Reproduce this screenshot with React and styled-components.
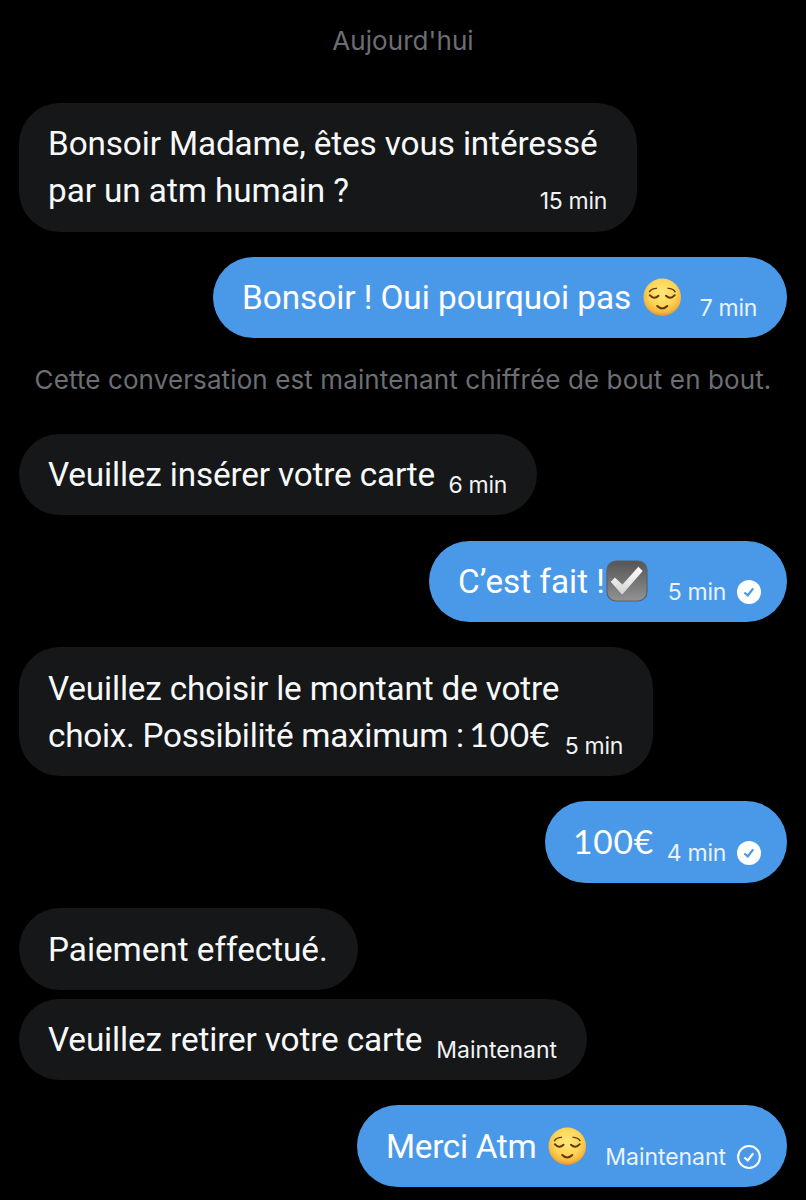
import React from "react";
import styled, { createGlobalStyle } from "styled-components";

const GlobalStyle = createGlobalStyle`
  *, *::before, *::after { box-sizing: border-box; }
  body { margin: 0; background: #000; }
`;

const Conversation = styled.main`
  display: flex;
  flex-direction: column;
  gap: 25.25px;
  width: 806px;
  height: 1200px;
  padding: 19px 19px 0;
  overflow: hidden;
  background: #000;
`;

const Notice = styled.p`
  margin: 0;
  text-align: center;
  white-space: nowrap;
  color: #6b6f74;
  font: 400 26px/44px Inter, "Liberation Sans", sans-serif;
  letter-spacing: ${(p) => p.$tracking ?? 0}px;
`;

const DayLabel = styled(Notice)`
  margin-bottom: 14.6px;
`;

const EncryptionNote = styled(Notice)`
  margin: -5.4px 0 6px;
`;

const MessageGroup = styled.div`
  display: flex;
  flex-direction: column;
  align-items: ${(p) => (p.$sent ? "flex-end" : "flex-start")};
  gap: 8.5px;
`;

const Bubble = styled.article`
  display: flex;
  flex-direction: column;
  width: ${(p) => p.$width}px;
  padding: 17.4px 30px 17.3px 29px;
  border-radius: 41px;
  color: ${(p) => (p.$sent ? "#fff" : "#f7f9f9")};
  background: ${(p) => (p.$sent ? "#4a99e9" : "#161719")};
`;

const Line = styled.div`
  display: flex;
  justify-content: space-between;
  height: 47px;
  white-space: nowrap;
`;

const Body = styled.span`
  display: flex;
  font: 400 33.3px/47px Roboto, "Liberation Sans", sans-serif;
  letter-spacing: ${(p) => p.$tracking ?? 0}px;
`;

const Amount = styled.span`
  margin: ${(p) => (p.$inline ? "0 0 0 -4px" : "0 0 0 -1px")};
  font: 400 33.5px/45px Lato, sans-serif;
  letter-spacing: 0.8px;
`;

const Meta = styled.span`
  display: flex;
  align-items: center;
  gap: 11px;
  height: 24px;
  margin: 21.8px ${(p) => (p.$status ? "-4px" : "0")} 0 0;
  color: ${(p) => (p.$sent ? "#e8f3fd" : "#f1f3f4")};
  font: 400 23px/24px Inter, "Liberation Sans", sans-serif;
  letter-spacing: ${(p) => p.$tracking ?? -0.3}px;
`;

const FaceIcon = styled.svg`
  width: 38.5px;
  height: 38.5px;
  margin: 4px 0 0 ${(p) => p.$offset}px;
`;

const CheckboxIcon = styled.svg`
  width: 42px;
  height: 42px;
  margin: 2px 0 0 1px;
`;

const StatusIcon = styled.svg`
  width: 24px;
  height: 24px;
  fill: none;
`;

function RelievedFace({ id, offset }) {
  return (
    <FaceIcon viewBox="0 0 39 39" $offset={offset} role="img" aria-label="😌">
      <defs>
        <radialGradient id={id} cx=".5" cy=".38" r=".64">
          <stop offset="0" stopColor="#ffe878" />
          <stop offset=".55" stopColor="#fdd659" />
          <stop offset=".82" stopColor="#f5b840" />
          <stop offset="1" stopColor="#dc8a2c" />
        </radialGradient>
      </defs>
      <circle cx="19.5" cy="19.5" r="19" fill={`url(#${id})`} />
      <g fill="none" stroke="#633609" strokeLinecap="round">
        <path d="M6.6 13.8Q8.6 10.6 13.6 10.5M25.4 10.5Q30.4 10.6 32.4 13.8" strokeWidth="1.5" />
        <path d="M6.9 17.4Q11.2 22.4 15.7 18M23.3 18Q27.8 22.4 32.1 17.4" strokeWidth="2" />
        <path d="M14.4 28.4Q19.5 33.4 24.6 28.4" strokeWidth="2.1" />
      </g>
    </FaceIcon>
  );
}

function Checkbox() {
  return (
    <CheckboxIcon viewBox="0 0 42 42" role="img" aria-label="☑️">
      <defs>
        <linearGradient id="box" x2="0" y2="1">
          <stop stopColor="#555" />
          <stop offset="1" stopColor="#929292" />
        </linearGradient>
        <linearGradient id="tick" x2="0" y2="1">
          <stop stopColor="#fff" />
          <stop offset="1" stopColor="#d2d2d2" />
        </linearGradient>
      </defs>
      <rect x="1" y="1" width="40" height="40" rx="9" fill="url(#box)" stroke="#5b6168" strokeWidth="1.2" />
      <path d="M4.4 21.8l4.5-4.6 7.5 7.1L32.4 6.6l4.6 4.4-20.9 24.2z" fill="url(#tick)" stroke="#4c4c4c" strokeWidth=".4" />
    </CheckboxIcon>
  );
}

function Status({ kind }) {
  const read = kind === "read";
  return (
    <StatusIcon viewBox="0 0 24 24" role="img" aria-label={read ? "Lu" : "Envoyé"}>
      <circle cx="12" cy="12" r={read ? 12 : 10.9} fill={read ? "#fff" : "none"} stroke={read ? "none" : "#fff"} strokeWidth="2" />
      <path d="M7.4 12.5l3.4 2.9 5.4-7" stroke={read ? "#4a99e9" : "#fff"} strokeWidth="2.3" />
    </StatusIcon>
  );
}

function Message({ width, sent, lines, time, timeTracking, status }) {
  return (
    <Bubble $width={width} $sent={sent}>
      {lines.map(({ text, tracking, amount, extra }, i) => (
        <Line key={i}>
          <Body $tracking={tracking}>
            {text && <span>{text}</span>}
            {amount && <Amount $inline={Boolean(text)}>{text ? "\u00a0" : ""}{amount}</Amount>}
            {extra}
          </Body>
          {time && i === lines.length - 1 && (
            <Meta $sent={sent} $status={status} $tracking={timeTracking}>
              <time>{time}</time>
              {status && <Status kind={status} />}
            </Meta>
          )}
        </Line>
      ))}
    </Bubble>
  );
}

export default function App() {
  return (
    <>
      <GlobalStyle />
      <Conversation>
        <DayLabel $tracking={0.07}>Aujourd'hui</DayLabel>
        <MessageGroup>
          <Message
            width={618}
            time="15 min"
            lines={[
              { text: "Bonsoir Madame, êtes vous intéressé", tracking: -0.12 },
              { text: "par un atm humain ?", tracking: -0.07 },
            ]}
          />
        </MessageGroup>
        <MessageGroup $sent>
          <Message
            width={574}
            sent
            time="7 min"
            lines={[{ text: "Bonsoir ! Oui pourquoi pas", tracking: -0.03, extra: <RelievedFace id="face-reply" offset={12} /> }]}
          />
        </MessageGroup>
        <EncryptionNote $tracking={0.11}>Cette conversation est maintenant chiffrée de bout en bout.</EncryptionNote>
        <MessageGroup>
          <Message width={518} time="6 min" lines={[{ text: "Veuillez insérer votre carte", tracking: -0.16 }]} />
        </MessageGroup>
        <MessageGroup $sent>
          <Message
            width={358}
            sent
            time="5 min"
            status="read"
            lines={[{ text: "C’est fait !", tracking: 0, extra: <Checkbox /> }]}
          />
        </MessageGroup>
        <MessageGroup>
          <Message
            width={634}
            time="5 min"
            lines={[
              { text: "Veuillez choisir le montant de votre", tracking: -0.16 },
              { text: "choix. Possibilité maximum :", tracking: -0.27, amount: "100€" },
            ]}
          />
        </MessageGroup>
        <MessageGroup $sent>
          <Message width={242} sent time="4 min" status="read" lines={[{ amount: "100€" }]} />
        </MessageGroup>
        <MessageGroup>
          <Message width={338.5} lines={[{ text: "Paiement effectué.", tracking: -0.03 }]} />
          <Message
            width={568}
            time="Maintenant"
            timeTracking={-0.05}
            lines={[{ text: "Veuillez retirer votre carte", tracking: -0.13 }]}
          />
        </MessageGroup>
        <MessageGroup $sent>
          <Message
            width={430}
            sent
            time="Maintenant"
            timeTracking={-0.05}
            status="sent"
            lines={[{ text: "Merci Atm", tracking: -0.3, extra: <RelievedFace id="face-thanks" offset={12} /> }]}
          />
        </MessageGroup>
      </Conversation>
    </>
  );
}
